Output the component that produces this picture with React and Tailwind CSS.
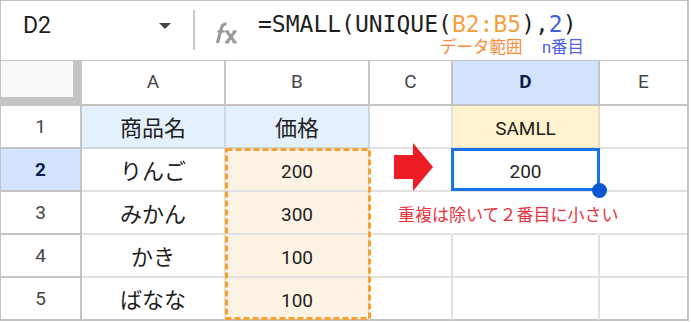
const ROWS = [
  { n: 1, a: '商品名', b: '価格', d: 'SAMLL' },
  { n: 2, a: 'りんご', b: '200', d: '200' },
  { n: 3, a: 'みかん', b: '300', d: '' },
  { n: 4, a: 'かき', b: '100', d: '' },
  { n: 5, a: 'ばなな', b: '100', d: '' },
];

const COLS = [
  { key: 'A', w: 'w-[144px]' },
  { key: 'B', w: 'w-[144px]' },
  { key: 'C', w: 'w-[83px]' },
  { key: 'D', w: 'w-[147px]' },
  { key: 'E', w: 'w-[87px]' },
];

function FxIcon() {
  return (
    <svg width="24" height="22" viewBox="0 0 24 22" fill="none" stroke="#9a9a9a" strokeLinecap="butt">
      <path d="M3.4 21 L7.6 5.4 Q8.6 1.8 12.6 2" strokeWidth="3.2" />
      <path d="M3.4 9.4 H10.6" strokeWidth="2.4" />
      <path d="M12.4 8.8 L21.4 21 M21.4 8.8 L12.4 21" strokeWidth="3" />
      <path d="M11 9.2 H15.2 M18.6 9.2 H22.8 M11 20.4 H15.2 M18.6 20.4 H22.8" strokeWidth="1.6" />
    </svg>
  );
}

function RedArrow() {
  return (
    <svg width="40" height="48" viewBox="0 0 40 48">
      <path d="M0 12 H19 V0 L39 24 L19 48 V36 H0 Z" fill="#ed1c24" />
    </svg>
  );
}

function FormulaBar() {
  return (
    <div className="relative flex items-start h-[60px] border-b border-[#c4c4c4]">
      <div className="flex items-center justify-between w-[192px] h-[27px] mt-[11px] pl-[22px] pr-[22px]">
        <span className="text-[23px] leading-[27px] text-[#1f1f1f]">D2</span>
        <span className="w-0 h-0 border-l-[6.5px] border-r-[6.5px] border-t-[6px] border-l-transparent border-r-transparent border-t-[#444746]" />
      </div>
      <div className="w-[2px] h-[40px] mt-[9px] bg-[#c7c7c7]" />
      <div className="ml-[19px] mt-[21px] w-[44px]">
        <FxIcon />
      </div>
      <div className="mt-[10px] text-[23px] leading-[27px] font-['DejaVu_Sans_Mono',monospace] text-[#1f1f1f] whitespace-nowrap">
        =SMALL(UNIQUE(<span className="text-[#f5a03e]">B2:B5</span>),<span className="text-[#3d5fd9]">2</span>)
      </div>
      {/* annotations drawn over the bar */}
      <span className="absolute left-[439px] top-[39px] text-[16.5px] leading-none text-[#fb8a3c] whitespace-nowrap">
        データ範囲
      </span>
      <span className="absolute left-[541px] top-[39px] text-[16.5px] leading-none text-[#4f5ee8] whitespace-nowrap">
        n番目
      </span>
    </div>
  );
}

function HeaderRow() {
  return (
    <div className="flex h-[45px]">
      <div className="w-[81px] bg-[#f8f9fa] border-r-[9px] border-b-[9px] border-[#c4c4c4]" />
      {COLS.map((c) => (
        <div
          key={c.key}
          className={`${c.w} flex items-center justify-center text-[19px] border-b-2 border-[#c4c4c4] ${
            c.key === 'E' ? '' : 'border-r-2'
          } ${c.key === 'D' ? 'bg-[#d3e3fd] font-bold text-[#0b1f4d]' : 'text-[#444746]'}`}
        >
          {c.key}
        </div>
      ))}
    </div>
  );
}

function DataRow({ row, last }) {
  const head = row.n === 1;
  const bottom = last ? 'border-b-[#c4c4c4]' : '';
  return (
    <div className="flex h-[43px]">
      <div
        className={`w-[81px] flex items-center justify-center pt-[2px] text-[19px] border-r-2 border-b-2 border-[#c4c4c4] ${
          row.n === 2 ? 'bg-[#d3e3fd] font-bold text-[#0b1f4d]' : 'text-[#444746]'
        }`}
      >
        {row.n}
      </div>
      <div
        className={`w-[144px] flex items-center justify-center pt-[3px] text-[22px] border-r-2 border-b-2 ${
          head ? 'bg-[#e4f0fc] border-[#cbd8e4]' : 'border-[#e1e1e1]'
        } ${bottom}`}
      >
        {row.a}
      </div>
      <div
        className={`w-[144px] flex items-center justify-center border-r-2 border-b-2 ${
          head ? 'bg-[#e4f0fc] border-[#cbd8e4] text-[22px] pt-[3px]' : 'bg-[#fcf3e5] border-[#e1e1e1] text-[19px] pt-[5px]'
        } ${bottom}`}
      >
        {row.b}
      </div>
      <div
        className={`relative w-[83px] border-b-2 border-r-2 border-[#e1e1e1] ${
          row.n === 3 ? 'border-r-white' : ''
        } ${bottom}`}
      >
        {row.n === 2 && (
          <div className="absolute left-[24px] top-[-6px] z-10">
            <RedArrow />
          </div>
        )}
        {row.n === 3 && (
          <span className="absolute left-[28px] top-[11px] z-10 text-[17px] leading-[24px] text-[#e8333f] whitespace-nowrap">
            重複は除いて２番目に小さい
          </span>
        )}
      </div>
      <div
        className={`relative w-[147px] flex items-center justify-center pt-[5px] text-[19px] border-r-2 border-b-2 ${
          head ? 'bg-[#fff2cc] border-[#e6ddc2]' : 'border-[#e1e1e1]'
        } ${row.n === 3 ? 'border-r-white' : ''} ${bottom}`}
      >
        {row.d}
        {row.n === 2 && (
          <>
            <div className="absolute left-[-2px] top-[-1px] w-[149px] h-[43px] border-[3px] border-[#1a73e8]" />
            <div className="absolute left-[139px] top-[34px] w-[15px] h-[15px] rounded-full bg-[#0b57d0] z-20" />
          </>
        )}
      </div>
      <div className={`w-[87px] border-b-2 border-[#e1e1e1] ${bottom}`} />
    </div>
  );
}

export default function App() {
  return (
    <div className="w-[691px] h-[322px] bg-white overflow-hidden font-[Roboto,'Noto_Sans_CJK_JP',sans-serif] text-[#1f1f1f]">
      <div className="w-[689px] border-l border-t border-r-2 border-[#c4c4c4]">
        <FormulaBar />
        <HeaderRow />
        <div className="relative">
          {ROWS.map((r, i) => (
            <DataRow key={r.n} row={r} last={i === ROWS.length - 1} />
          ))}
          {/* copy range marker over B2:B5 */}
          <svg className="absolute left-[224px] top-[42px] pointer-events-none" width="146" height="172">
            <rect
              x="1.5"
              y="1.5"
              width="143"
              height="169"
              fill="none"
              stroke="#f7a130"
              strokeWidth="3"
              strokeDasharray="6 3"
            />
          </svg>
        </div>
      </div>
    </div>
  );
}
